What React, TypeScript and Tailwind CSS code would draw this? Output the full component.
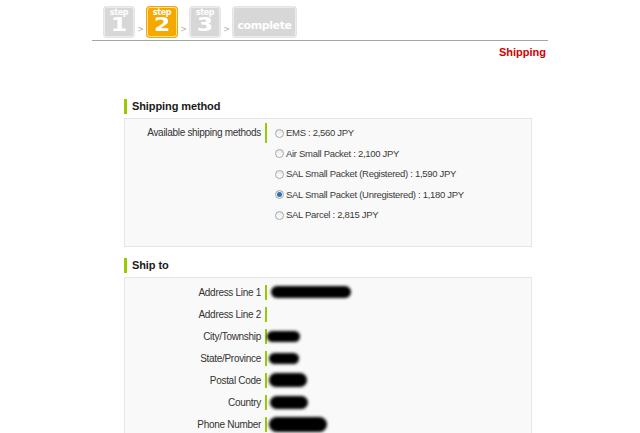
import React from "react";

const GREEN = "bg-[#99cc00]";

function StepBox({ n, active }: { n: string; active?: boolean }) {
  return (
    <div
      className={
        "w-[32px] h-[32px] rounded-[4px] p-[1px] " +
        (active ? "bg-[#f5a800]" : "bg-[#e4e4e4]")
      }
    >
      <div
        className={
          "w-full h-full rounded-[3px] border flex flex-col items-center justify-between text-white font-bold " +
          (active ? "bg-[#f5a800] border-[#ffe2a0]" : "bg-[#d7d7d7] border-[#ececec]")
        }
        style={{ fontFamily: '"DejaVu Sans", Verdana, sans-serif' }}
      >
        <span className="text-[8px] leading-[9px] tracking-[-0.3px]">step</span>
        <span className="text-[17px] leading-[19px] scale-x-[1.4] scale-y-[1.15] origin-bottom">{n}</span>
      </div>
    </div>
  );
}

function Arrow() {
  return (
    <span
      className="w-[11px] text-center text-[8px] leading-[8px] text-[#b0b0b0] self-end mb-[4px]"
      style={{ fontFamily: '"DejaVu Sans", sans-serif' }}
    >
      &gt;
    </span>
  );
}

function Radio({ checked }: { checked?: boolean }) {
  return (
    <span className="w-[9px] h-[9px] rounded-full border border-[#a8a8a8] bg-gradient-to-b from-[#e8e8e8] to-[#ffffff] flex items-center justify-center mr-[2px] shrink-0">
      {checked && <span className="w-[5px] h-[5px] rounded-full bg-[#2f6fb8]" />}
    </span>
  );
}

function Heading({ children }: { children: React.ReactNode }) {
  return (
    <div className="flex items-center h-[15px]">
      <div className={"w-[3px] h-[15px] " + GREEN} />
      <span className="ml-[5px] text-[11px] font-bold text-[#1a1a1a] tracking-[-0.1px]">{children}</span>
    </div>
  );
}

const options = [
  { t: "EMS : 2,560 JPY" },
  { t: "Air Small Packet : 2,100 JPY" },
  { t: "SAL Small Packet (Registered) : 1,590 JPY" },
  { t: "SAL Small Packet (Unregistered) : 1,180 JPY", c: true },
  { t: "SAL Parcel : 2,815 JPY" },
];

const shipRows: { label: string; blob?: { ml: number; w: number; h: number } }[] = [
  { label: "Address Line 1", blob: { ml: 4, w: 80, h: 12 } },
  { label: "Address Line 2" },
  { label: "City/Township", blob: { ml: 0, w: 33, h: 11 } },
  { label: "State/Province", blob: { ml: 2, w: 30, h: 11 } },
  { label: "Postal Code", blob: { ml: 2, w: 38, h: 14 } },
  { label: "Country", blob: { ml: 3, w: 38, h: 13 } },
  { label: "Phone Number", blob: { ml: 2, w: 58, h: 15 } },
];

export default function App() {
  return (
    <div
      className="w-[640px] h-[433px] bg-white overflow-hidden"
      style={{ fontFamily: '"Liberation Sans", Arial, sans-serif' }}
    >
      <div className="w-[456px] mx-auto">
        {/* steps */}
        <div className="flex pt-[6px] pl-[11px] h-[38px]">
          <StepBox n="1" />
          <Arrow />
          <StepBox n="2" active />
          <Arrow />
          <StepBox n="3" />
          <Arrow />
          <div className="w-[65px] h-[32px] rounded-[4px] p-[1px] bg-[#e4e4e4]">
            <div
              className="w-full h-full rounded-[3px] border border-[#ececec] bg-[#d7d7d7] flex items-end justify-center pb-[4px] text-white font-bold text-[11px] leading-[12px] tracking-[-0.4px]"
              style={{ fontFamily: '"DejaVu Sans", Verdana, sans-serif' }}
            >
              complete
            </div>
          </div>
        </div>
        <div className="mt-[2px] h-px bg-[#a6a6a6]" />
        <div className="mt-[5px] pr-[2px] text-right text-[11px] leading-[13px] font-bold text-[#d40000]">
          Shipping
        </div>

        {/* Shipping method */}
        <div className="ml-[32px] w-[408px] mt-[40px]">
          <Heading>Shipping method</Heading>
          <div className="mt-[4px] h-[129px] border border-[#e6e6e6] bg-[#f9f9f9] pt-[4px] flex text-[10px] text-[#333] tracking-[-0.3px]">
            <div className="w-[142px] h-[20px] leading-[20px] text-right pr-[4px] border-r-2 border-[#99cc00] shrink-0">
              Available shipping methods
            </div>
            <div className="pl-[8px] flex flex-col text-[9.5px] tracking-[-0.3px] text-[#3a3a3a]">
              {options.map((o) => (
                <div key={o.t} className="h-[20.5px] flex items-center">
                  <Radio checked={o.c} />
                  <span>{o.t}</span>
                </div>
              ))}
            </div>
          </div>
        </div>

        {/* Ship to */}
        <div className="ml-[32px] w-[408px] mt-[11px]">
          <Heading>Ship to</Heading>
          <div className="mt-[4px] h-[200px] border border-[#e6e6e6] bg-[#f9f9f9] pt-[3px] text-[10px] text-[#333] tracking-[-0.3px]">
            {shipRows.map((r) => (
              <div key={r.label} className="h-[22px] flex items-center">
                <div className="w-[142px] h-[15px] leading-[15px] text-right pr-[4px] border-r-2 border-[#99cc00] shrink-0">
                  {r.label}
                </div>
                {r.blob && (
                  <div
                    className="bg-black rounded-full blur-[1.5px]"
                    style={{ marginLeft: r.blob.ml, width: r.blob.w, height: r.blob.h }}
                  />
                )}
              </div>
            ))}
          </div>
        </div>
      </div>
    </div>
  );
}
